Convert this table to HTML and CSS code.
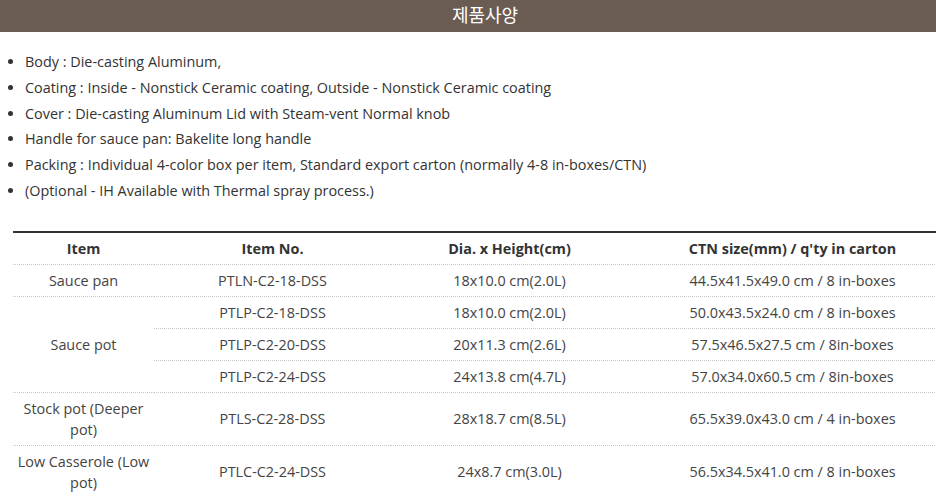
FILE: index.html
```html
<!DOCTYPE html>
<html lang="ko">
<head>
<meta charset="utf-8">
<title>제품사양</title>
<link rel="stylesheet" href="styles.css">
</head>
<body>
<div class="page">
  <h2 class="title">제품사양</h2>
  <ul class="specs">
    <li>Body : Die-casting Aluminum,</li>
    <li>Coating : Inside - Nonstick Ceramic coating, Outside - Nonstick Ceramic coating</li>
    <li>Cover : Die-casting Aluminum Lid with Steam-vent Normal knob</li>
    <li>Handle for sauce pan: Bakelite long handle</li>
    <li>Packing : Individual 4-color box per item, Standard export carton (normally 4-8 in-boxes/CTN)</li>
    <li>(Optional - IH Available with Thermal spray process.)</li>
  </ul>
  <table class="spec-table">
    <colgroup>
      <col class="c1"><col class="c2"><col class="c3"><col class="c4">
    </colgroup>
    <thead>
      <tr><th>Item</th><th>Item No.</th><th>Dia. x Height(cm)</th><th>CTN size(mm) / q'ty in carton</th></tr>
    </thead>
    <tbody>
      <tr><td>Sauce pan</td><td>PTLN-C2-18-DSS</td><td>18x10.0 cm(2.0L)</td><td>44.5x41.5x49.0 cm / 8 in-boxes</td></tr>
      <tr><td rowspan="3">Sauce pot</td><td>PTLP-C2-18-DSS</td><td>18x10.0 cm(2.0L)</td><td>50.0x43.5x24.0 cm / 8 in-boxes</td></tr>
      <tr><td>PTLP-C2-20-DSS</td><td>20x11.3 cm(2.6L)</td><td>57.5x46.5x27.5 cm / 8in-boxes</td></tr>
      <tr><td>PTLP-C2-24-DSS</td><td>24x13.8 cm(4.7L)</td><td>57.0x34.0x60.5 cm / 8in-boxes</td></tr>
      <tr><td>Stock pot (Deeper pot)</td><td>PTLS-C2-28-DSS</td><td>28x18.7 cm(8.5L)</td><td>65.5x39.0x43.0 cm / 4 in-boxes</td></tr>
      <tr><td>Low Casserole (Low pot)</td><td>PTLC-C2-24-DSS</td><td>24x8.7 cm(3.0L)</td><td>56.5x34.5x41.0 cm / 8 in-boxes</td></tr>
    </tbody>
  </table>
</div>
</body>
</html>
```

FILE: styles.css
```css
html, body {
  margin: 0;
  padding: 0;
  overflow: hidden;
  background: #fff;
}
body {
  font-family: "Open Sans", "Noto Sans", sans-serif;
  font-size: 14.4px;
  color: #333;
}
.page {
  width: 970px;
}
.title {
  margin: 0;
  height: 32px;
  line-height: 28px;
  background: #6b5c53;
  color: #fff;
  text-align: center;
  font-family: "Noto Sans CJK KR", "Noto Sans", sans-serif;
  font-size: 18px;
  font-weight: normal;
}
.specs {
  margin: 17px 0 0;
  padding: 0 0 0 25px;
  list-style: disc;
  line-height: 25.8px;
}
.spec-table {
  margin: 27px 13px 0;
  width: 944px;
  border-collapse: collapse;
  border-top: 2px solid #333;
  table-layout: fixed;
}
.c1 { width: 141px; }
.c2 { width: 237px; }
.c3 { width: 237px; }
.c4 { width: 329px; }
.spec-table th,
.spec-table td {
  padding: 5px 4px;
  line-height: 21px;
  text-align: center;
  vertical-align: middle;
  border-bottom: 1px dotted #c8c8c8;
}
.spec-table th {
  font-weight: bold;
  color: #333;
}
.spec-table td {
  color: #444;
}
```
